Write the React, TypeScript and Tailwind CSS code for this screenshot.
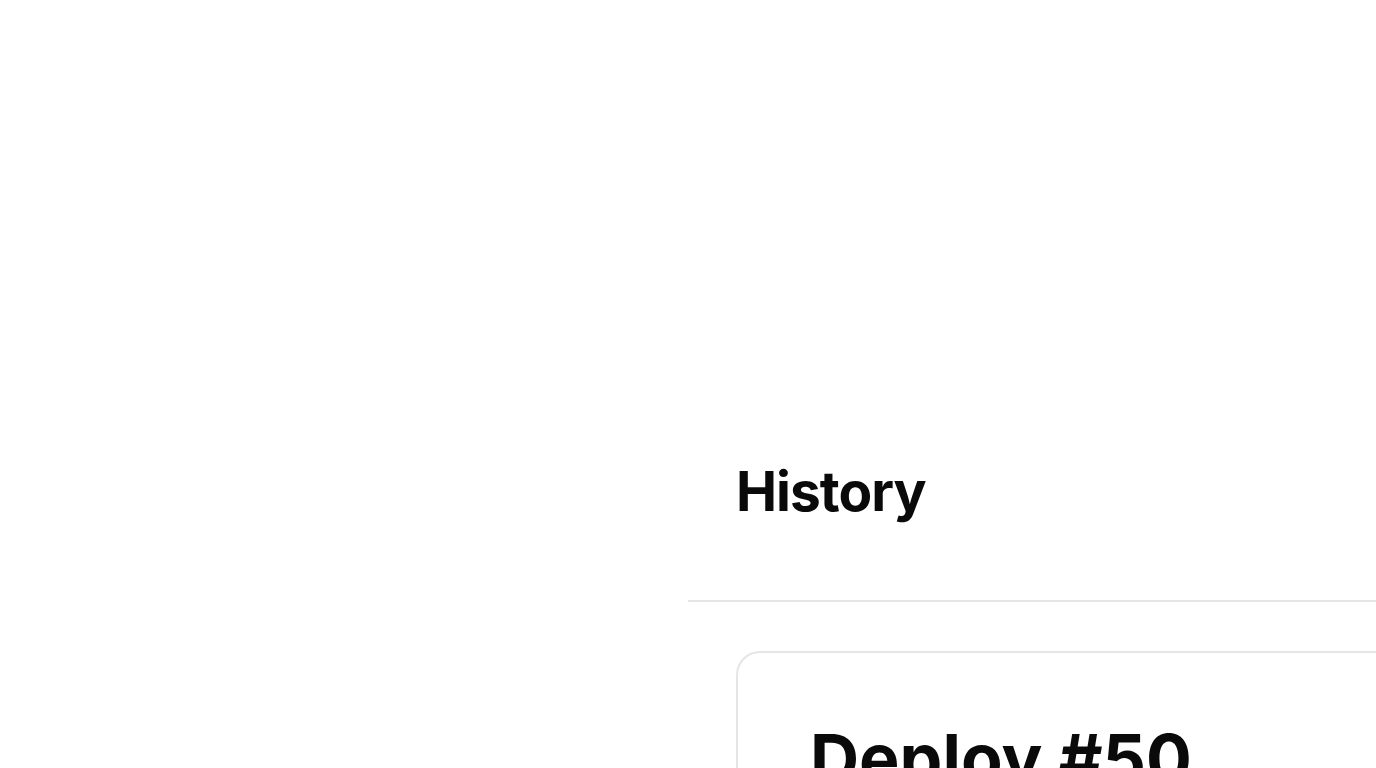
import React from "react";

export default function App() {
  return (
    <div
      className="w-[1376px] h-[768px] overflow-hidden bg-white flex"
      style={{ fontFamily: "Inter, 'Noto Sans', sans-serif" }}
    >
      <div className="w-[688px] shrink-0" />
      <div className="flex flex-col shrink-0 w-[1000px]">
        <div className="pt-[459px] pb-[77px] px-[48px] border-b-[2px] border-[#e5e5e5]">
          <h1 className="text-[55px] leading-[64px] font-bold tracking-[-1px] text-[#0a0a0a]">
            History
          </h1>
        </div>
        <div className="px-[48px] pt-[49px]">
          <div className="w-[900px] rounded-[24px] border-[2px] border-[#e5e5e5] pt-[71px] pl-[72px]">
            <h2 className="text-[68px] leading-[68px] font-bold text-[#0a0a0a]">
              Deploy #50
            </h2>
          </div>
        </div>
      </div>
    </div>
  );
}
